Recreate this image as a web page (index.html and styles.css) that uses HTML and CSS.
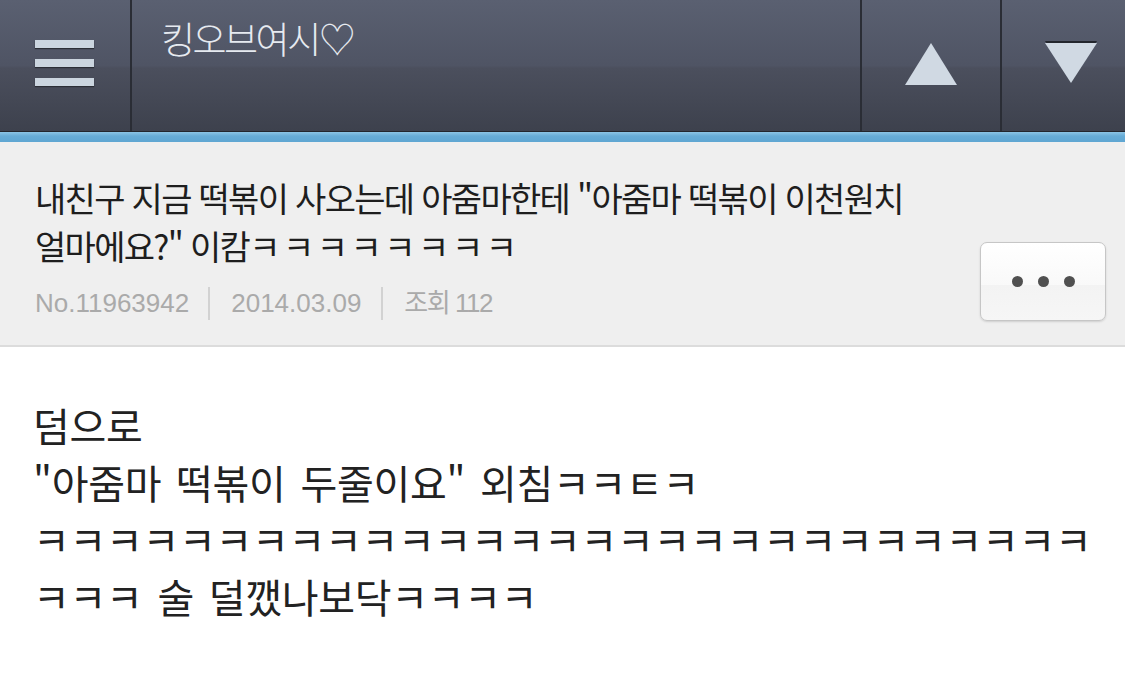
FILE: index.html
```html
<!DOCTYPE html>
<html lang="ko">
    <head>
        <meta charset="UTF-8" />
        <meta name="viewport" content="width=device-width, initial-scale=1.0" />
        <title>킹오브여시</title>
        <link rel="stylesheet" href="styles.css">
    </head>

    <body>
        <div class="topbar">
            <div class="menuBtn">
                <span class="bar"></span>
                <span class="bar"></span>
                <span class="bar"></span>
            </div>
            <div class="boardTitle">킹오브여시♡</div>
            <div class="navBtn">
                <span class="arrowUp"></span>
            </div>
            <div class="navBtn last">
                <span class="arrowDown"></span>
            </div>
        </div>
        <div class="accent"></div>

        <div class="postHead">
            <div class="headText">
                <h1 class="postTitle">내친구 지금 떡볶이 사오는데 아줌마한테 "아줌마 떡볶이 이천원치<br />얼마에요?" 이캄<span class="laugh">ㅋㅋㅋㅋㅋㅋㅋㅋ</span></h1>
                <div class="meta">
                    <span class="metaItem first">No.11963942</span>
                    <span class="metaItem">2014.03.09</span>
                    <span class="metaItem views">조회 112</span>
                </div>
            </div>
            <button class="moreBtn">
                <span class="dot"></span>
                <span class="dot"></span>
                <span class="dot"></span>
            </button>
        </div>

        <div class="postBody">
            <p>덤으로<br />"아줌마 떡볶이 두줄이요" 외침ㅋㅋㅌㅋ<br />ㅋㅋㅋㅋㅋㅋㅋㅋㅋㅋㅋㅋㅋㅋㅋㅋㅋㅋㅋㅋㅋㅋㅋㅋㅋㅋㅋㅋㅋ<br />ㅋㅋㅋ 술 덜깼나보닥ㅋㅋㅋㅋ</p>
        </div>
    </body>
</html>
```

FILE: styles.css
```css
body {
    margin: 0;
    background-color: #ffffff;
    font-family: "Noto Sans CJK KR", "Noto Sans", sans-serif;
    overflow: hidden;
}
.topbar {
    display: flex;
    height: 131px;
    background: linear-gradient(#5a6071, #4f5464 50%, #4b4f5d 52%, #3d414d);
    border-bottom: 1px solid #23262d;
}
.menuBtn {
    width: 132px;
    display: flex;
    flex-direction: column;
    padding: 40px 0 0 35px;
    box-sizing: border-box;
    gap: 11px;
    border-right: 2px solid #2a2d35;
}
.bar {
    display: block;
    width: 59px;
    height: 8px;
    background-color: #cbd5df;
    box-shadow: 0 1px 1px #2b2e36;
}
.boardTitle {
    flex: 1;
    padding: 11px 0 0 29px;
    font-size: 37px;
    font-weight: 300;
    letter-spacing: -2.5px;
    color: #e6eaf0;
}
.navBtn {
    width: 140px;
    display: flex;
    justify-content: center;
    padding-top: 43px;
    box-sizing: border-box;
    border-left: 2px solid #2a2d35;
}
.navBtn.last {
    width: 125px;
    padding-left: 15px;
}
.arrowUp {
    width: 0;
    height: 0;
    border-left: 26px solid transparent;
    border-right: 26px solid transparent;
    border-bottom: 42px solid #d0d9e3;
}
.arrowDown {
    width: 0;
    height: 0;
    border-left: 26px solid transparent;
    border-right: 26px solid transparent;
    border-top: 40px solid #d0d9e3;
    filter: drop-shadow(0 -2px 0 #23262d);
}
.accent {
    height: 10px;
    background: linear-gradient(#8cc4e4, #67acd6 40%, #5fa6d2);
}
.postHead {
    display: flex;
    justify-content: space-between;
    background-color: #efefef;
    padding: 32px 19px 22px 35px;
    border-bottom: 2px solid #dcdcdc;
}
.postTitle {
    margin: 0;
    font-size: 34px;
    font-weight: 400;
    letter-spacing: -1.7px;
    line-height: 48px;
    color: #1e1e1e;
}
.laugh {
    letter-spacing: 2.5px;
}
.meta {
    display: flex;
    margin-top: 13px;
    height: 40px;
    align-items: center;
}
.metaItem {
    font-family: "Liberation Sans", "Noto Sans CJK KR", sans-serif;
    font-size: 26px;
    color: #aaaaaa;
    padding: 0 20px 0 21px;
    border-left: 2px solid #d2d2d2;
    line-height: 33px;
}
.metaItem.first {
    padding-left: 0;
    padding-right: 19px;
    border-left: none;
}
.metaItem.views {
    letter-spacing: -1.5px;
}
.moreBtn {
    margin-top: 68px;
    width: 126px;
    height: 79px;
    display: flex;
    justify-content: center;
    align-items: center;
    gap: 15px;
    background: linear-gradient(#ffffff, #f9f9f9 55%, #f3f3f3 55%, #f6f6f6);
    border: 1px solid #c6c6c6;
    border-radius: 7px;
    box-shadow: 0 1px 2px #cfcfcf;
    padding: 0;
}
.dot {
    width: 11px;
    height: 11px;
    border-radius: 50%;
    background-color: #505050;
}
.postBody {
    padding: 50px 33px;
}
.postBody p {
    margin: 0;
    font-size: 40px;
    line-height: 57px;
    letter-spacing: -0.3px;
    word-spacing: 4px;
    color: #222222;
    white-space: nowrap;
}
```
